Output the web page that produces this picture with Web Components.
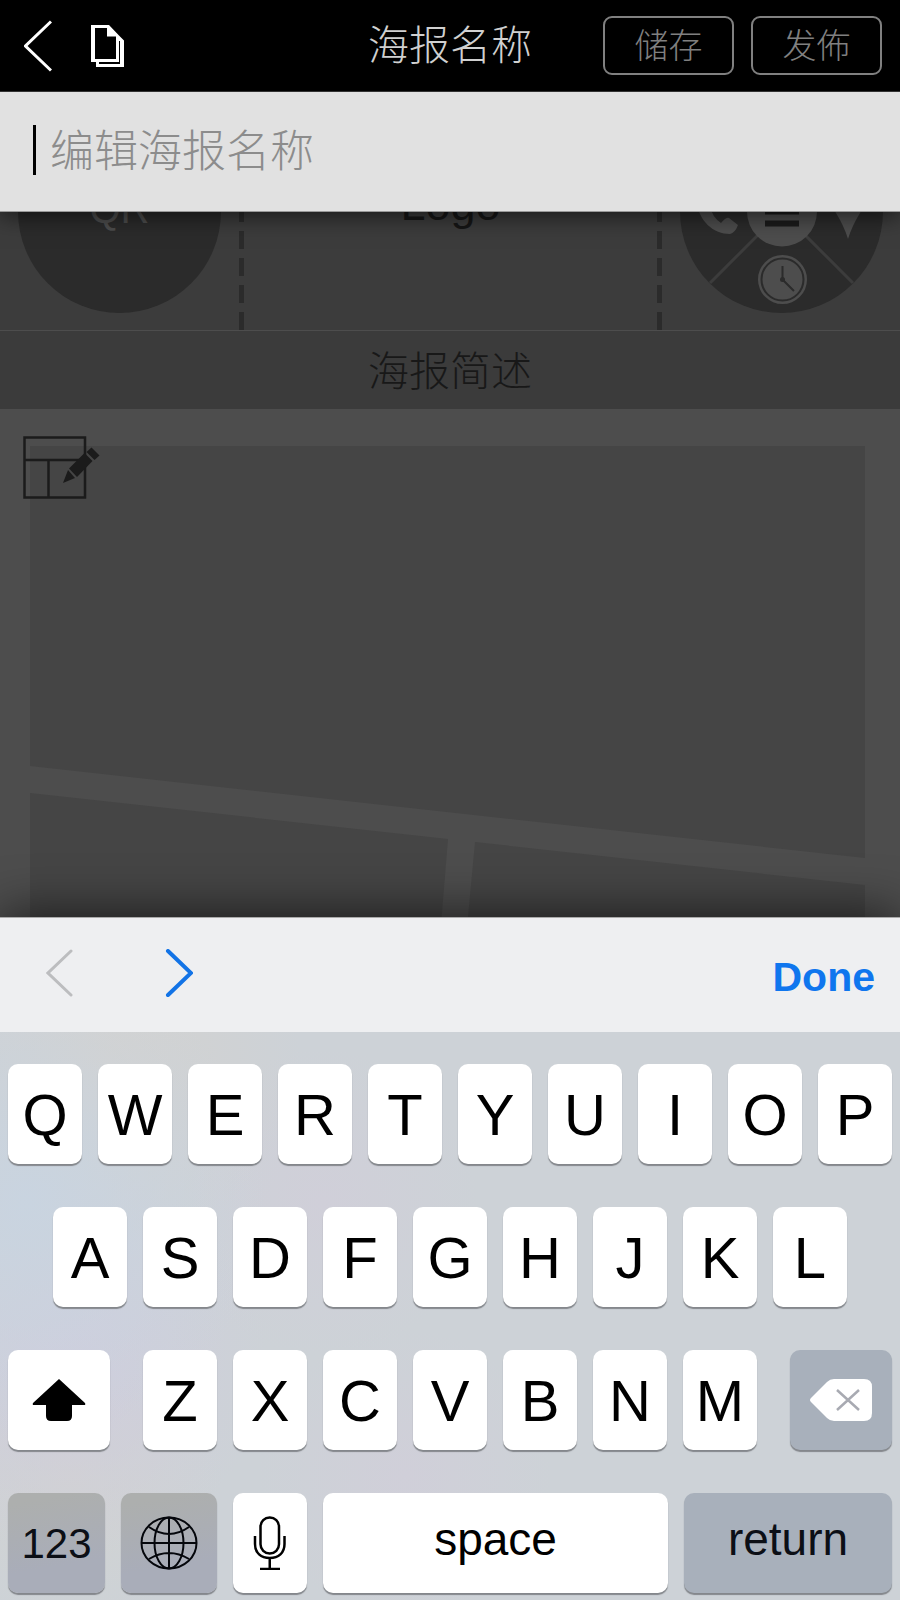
<!DOCTYPE html>
<html lang="zh-CN">
<head>
<meta charset="utf-8">
<meta name="viewport" content="width=device-width, initial-scale=1">
<title>海报名称</title>
<style>
  html, body { margin: 0; height: 100%; }
  body { background: #4d4d4d; font-family: "Liberation Sans", "Noto Sans CJK SC", sans-serif; }
</style>
</head>
<body>
<poster-app></poster-app>

<script>
const define = (name, html, setup) => {
  const template = document.createElement("template");
  template.innerHTML = html;
  customElements.define(name, class extends HTMLElement {
    constructor() {
      super();
      this.attachShadow({ mode: "open" }).append(template.content.cloneNode(true));
    }
    connectedCallback() { if (setup) setup(this, this.shadowRoot); }
  });
};

const CJK = `font-family: "Noto Sans CJK SC", "Liberation Sans", sans-serif; font-weight: 300;`;

/* Outlined button of the title bar */
define("bar-button", `
  <style>
    :host { display: block; }
    button { display: block; box-sizing: border-box; width: 131px; height: 59px; padding: 0 0 4px; margin: 0;
      border: 2px solid #808080; border-radius: 9px; background: none; color: #808080;
      ${CJK} font-size: 34px; line-height: 51px; }
  </style>
  <button type="button"><slot></slot></button>`);

/* Title bar */
define("title-bar", `
  <style>
    :host { display: grid; grid-template-columns: 1fr auto 1fr; align-items: center;
      box-sizing: border-box; height: 92px; padding: 0 18px; background: #000;
      border-bottom: 1px solid #333; color: #d0d0d0; }
    .left, .right { display: flex; align-items: center; }
    .left { gap: 39px; padding-left: 6px; }
    .right { gap: 17px; justify-content: flex-end; }
    .icon { padding: 0; border: 0; background: none; display: block; }
    svg { display: block; }
    h1 { margin: 0; padding-bottom: 8px; ${CJK} font-size: 41px; line-height: 60px; }
  </style>
  <div class="left">
    <button class="icon" type="button" aria-label="返回">
      <svg width="28" height="52" viewBox="0 0 28 52" fill="none" stroke="#fff" stroke-width="3"><path d="M27 1.500 1.500 26 27 50.500"/></svg>
    </button>
    <button class="icon" type="button" aria-label="页面">
      <svg width="34" height="42" viewBox="0 0 34 42" fill="#fff"><path fill-rule="evenodd" d="M0 0H18L28 10.500V37H0ZM4 3V34H25V11.500H16V3Z"/><path d="M28 10.500 33 15.500V42H5V37H8V39H29V16H28Z"/></svg>
    </button>
  </div>
  <h1><slot></slot></h1>
  <div class="right"><bar-button>储存</bar-button><bar-button>发佈</bar-button></div>`);

/* Name editor, dropped over the poster */
define("name-editor", `
  <style>
    :host { display: flex; align-items: center; gap: 14px; box-sizing: border-box; height: 120px;
      padding: 0 33px 4px; background: #e1e1e1; border-bottom: 1px solid #999;
      box-shadow: 0 4px 22px rgba(0,0,0,.6); }
    .caret { width: 3px; height: 50px; background: #000; }
    input { flex: 1; min-width: 0; box-sizing: border-box; padding: 0 0 4px; border: 0; outline: 0;
      background: none; color: #000; ${CJK} font-size: 44px; height: 70px; line-height: 66px; }
    input::placeholder { color: #8c8c8c; opacity: 1; }
  </style>
  <span class="caret"></span>
  <input type="text" aria-label="海报名称" placeholder="编辑海报名称">`);

/* Poster head: QR code, logo slot, contact wheel */
define("poster-head", `
  <style>
    :host { display: grid; grid-template-columns: 239px 1fr 238px; box-sizing: border-box;
      height: 239px; border-bottom: 1px solid #4d4d4d; background: #3c3c3c; }
    .cell { display: flex; justify-content: center; align-items: center; }
    .disc { display: flex; justify-content: center; align-items: center; box-sizing: border-box;
      width: 203px; height: 203px; padding-bottom: 4px;
      border-radius: 50%; background: #2b2b2b; color: #4d4d4d; font-size: 40px; line-height: 46px; }
    .logo { color: #161616; font-size: 45px; line-height: 50px; padding-bottom: 12px;
      background:
        repeating-linear-gradient(to top, #2b2b2b 0 18px, transparent 18px 27px) left / 5px 100% no-repeat,
        repeating-linear-gradient(to top, #2b2b2b 0 18px, transparent 18px 27px) right / 5px 100% no-repeat; }
    svg { display: block; }
  </style>
  <div class="cell"><div class="disc">QR</div></div>
  <div class="cell logo">Logo</div>
  <div class="cell">
    <svg width="203" height="203" viewBox="0 0 203 203" role="img" aria-label="联系方式">
      <circle cx="101.500" cy="101.500" r="101.500" fill="#2b2b2b"/>
      <path d="M30 173 173 30M173 173 30 30" stroke="#3c3c3c" stroke-width="3"/>
      <circle cx="102" cy="101.500" r="35" fill="#4d4d4d"/>
      <path d="M85 89.500h34M85 101.500h34M85 113.500h34" stroke="#1b1b1b" stroke-width="6"/>
      <path d="M16 88C18 112 34 124 50 124Q55 123 58 115L49 108Q46 107 41 113Q32 107 30 96L32 88Z" fill="#4d4d4d"/>
      <path d="M168 129Q164 116 156 103A15 15 0 1 1 180 103Q172 116 168 129Z" fill="#4d4d4d"/>
      <circle cx="102.500" cy="169.500" r="24.500" fill="#4d4d4d"/>
      <circle cx="102.500" cy="169.500" r="21" fill="none" stroke="#2b2b2b" stroke-width="2"/>
      <path d="M102.500 156V169.500L114 181" fill="none" stroke="#2b2b2b" stroke-width="2"/>
      <circle cx="102.500" cy="169.500" r="2.500" fill="#2b2b2b"/>
    </svg>
  </div>`);

/* Poster summary and photo collage */
define("poster-body", `
  <style>
    :host { display: block; }
    h2 { box-sizing: border-box; margin: 0; height: 78px; padding-top: 5px; background: #3b3b3b; color: #181818;
      text-align: center; ${CJK} font-size: 41px; line-height: 64px; }
    .collage { position: relative; background: #4d4d4d; }
    .collage > svg { display: block; width: 100%; height: auto; }
    button { position: absolute; left: 23px; top: 26px; padding: 0; border: 0; background: none; }
    button svg { display: block; }
  </style>
  <h2>海报简述</h2>
  <div class="collage">
    <svg viewBox="0 0 900 740" fill="#454545" aria-hidden="true">
      <path d="M30 37H865V449L30 357Z"/>
      <path d="M30 384 448 430 426 700H30Z"/>
      <path d="M475 433 865 476V700H450Z"/>
    </svg>
    <button type="button" aria-label="编辑版式">
      <svg width="78" height="64" viewBox="0 0 78 64" fill="none" stroke="#1b1b1b" stroke-width="2.500">
        <path d="M1.500 2.500H62V62.500H1.500ZM1.500 25H62M25.500 25V62.500"/>
        <g fill="#1b1b1b" stroke="none"><path d="M40 48 45 35 52 43Z"/><path d="M46 33.500 61.500 18 69.500 26 54 42Z"/><path d="M63.500 17 68.500 12.500 76.500 20.500 71.500 25Z"/></g>
      </svg>
    </button>
  </div>`);

/* One key; the kind attribute picks its look */
define("key-cap", `
  <style>
    :host { display: block; min-width: 0; }
    button { display: flex; justify-content: center; align-items: center; box-sizing: border-box;
      width: 100%; height: 100px; padding: 2px 0 0; margin: 0; border: 0; border-radius: 10px;
      background: #fff; color: #000; box-shadow: 0 2px 1px #84878c;
      font-family: "Liberation Sans", sans-serif; font-size: 58px; line-height: 64px; }
    :host([kind~="icon"]) button { padding: 0; }
    :host([kind~="word"]) button { font-size: 46px; line-height: 50px; padding: 0 0 8px; }
    :host([kind~="digits"]) button { font-size: 42px; line-height: 48px; }
    :host([kind~="dark"]) button { background: #a8b0bb; color: #0c0f16; }
    :host([kind~="warm"]) button { background: linear-gradient(170deg, #adafae 10%, #a9adb9 70%); }
  </style>
  <button type="button"><slot></slot></button>`,
  (host, root) => {
    if (host.title) root.querySelector("button").setAttribute("aria-label", host.title);
  });

/* A run of letter keys, from its letters attribute */
define("key-run", `
  <style>
    :host { display: grid; grid-auto-flow: column; grid-auto-columns: minmax(0, 1fr); gap: 16px; }
  </style>`,
  (host, root) => {
    for (const letter of host.getAttribute("letters")) {
      const key = document.createElement("key-cap");
      key.textContent = letter;
      root.append(key);
    }
  });

/* Toolbar over the keyboard */
define("input-accessory", `
  <style>
    :host { display: flex; align-items: center; gap: 91px; box-sizing: border-box; height: 115px;
      padding: 0 25px 0 46px; background: #eeeff1; border-top: 1px solid #aaa;
      box-shadow: 0 -4px 50px rgba(0,0,0,.6); }
    button { padding: 0 0 4px; border: 0; background: none; }
    svg { display: block; }
    .done { margin-left: auto; padding: 4px 0 0; color: #0f76ee; font-family: "Liberation Sans", sans-serif;
      font-weight: 700; font-size: 41px; line-height: 48px; }
  </style>
  <button type="button" aria-label="上一项"><svg width="28" height="48" viewBox="0 0 28 48" fill="none" stroke="#bcbdbf" stroke-width="3" stroke-linecap="round"><path d="M25 2 2 24 25 46"/></svg></button>
  <button type="button" aria-label="下一项"><svg width="28" height="48" viewBox="0 0 28 48" fill="none" stroke="#1273e6" stroke-width="4" stroke-linecap="round"><path d="M3 2 26 24 3 46"/></svg></button>
  <button class="done" type="button">Done</button>`);

define("soft-keyboard", `
  <style>
    :host { display: block; }
    .keys { display: grid; gap: 43px; padding: 32px 8px 7px;
      background:
        radial-gradient(circle at 3% 30%, #c9d4e0, transparent 25%),
        radial-gradient(circle at 8% 58%, #cfcddd, transparent 22%),
        radial-gradient(circle at 12% 4%, #d3d2d0, transparent 20%),
        radial-gradient(circle at 8% 78%, #d2d3d1, transparent 16%),
        radial-gradient(circle at 36% 30%, #d0cfd9, transparent 22%),
        radial-gradient(circle at 45% 78%, #d0cfd9, transparent 22%),
        #cdd2d7; }
    .home { padding: 0 45px; }
    .lower { display: grid; grid-template-columns: 102fr 614fr 102fr; gap: 33px; }
    .bottom { display: grid; grid-template-columns: 97fr 96fr 74fr 345fr 208fr; gap: 16px; }
    svg { display: block; }
  </style>
  <input-accessory></input-accessory>
  <div class="keys">
    <key-run letters="QWERTYUIOP"></key-run>
    <key-run class="home" letters="ASDFGHJKL"></key-run>
    <div class="lower">
      <key-cap kind="icon" title="Shift"><svg width="54" height="42" viewBox="0 0 54 42"><path d="M27 0 53 24Q54 26 52 26H40V37Q40 42 35 42H19Q14 42 14 37V26H2Q0 26 1 24Z"/></svg></key-cap>
      <key-run letters="ZXCVBNM"></key-run>
      <key-cap kind="icon dark" title="Delete"><svg width="62" height="42" viewBox="0 0 62 42"><path d="M1 19 17 3Q20 0 24 0H54Q62 0 62 8V34Q62 42 54 42H24Q20 42 17 39L1 23Q-1 21 1 19Z" fill="#fff"/><path d="M27 11 49 31M49 11 27 31" stroke="#a8aab2" stroke-width="2.500"/></svg></key-cap>
    </div>
    <div class="bottom">
      <key-cap kind="digits dark warm">123</key-cap>
      <key-cap kind="icon dark warm" title="Globe"><svg width="58" height="54" viewBox="0 0 58 54" fill="none" stroke="#05070c" stroke-width="2"><ellipse cx="29" cy="27" rx="27.500" ry="25.500"/><ellipse cx="29" cy="27" rx="14.500" ry="25.500"/><path d="M29 1V53M1 27H57M9 11Q29 25 49 11M9 43Q29 31 49 43"/></svg></key-cap>
      <key-cap kind="icon" title="Dictate"><svg width="34" height="54" viewBox="0 0 34 54" fill="none" stroke="#000" stroke-width="2.500"><rect x="7.500" y="1.500" width="18.500" height="36" rx="9.250"/><path d="M2 20V28C2 37 8 42 16.750 42S31.500 37 31.500 28V20M16.750 42V53M7 53H27"/></svg></key-cap>
      <key-cap kind="word">space</key-cap>
      <key-cap kind="word dark">return</key-cap>
    </div>
  </div>`);

/* Whole screen */
define("poster-app", `
  <style>
    :host { display: flex; flex-direction: column; min-height: 100vh; }
    main { position: relative; flex: 1 0 500px; height: 0; overflow: hidden; background: #4d4d4d; }
    name-editor { position: absolute; top: 0; left: 0; right: 0; }
    soft-keyboard { position: relative; }
  </style>
  <title-bar>海报名称</title-bar>
  <main>
    <poster-head></poster-head>
    <poster-body></poster-body>
    <name-editor></name-editor>
  </main>
  <soft-keyboard></soft-keyboard>`);
</script>
</body>
</html>
